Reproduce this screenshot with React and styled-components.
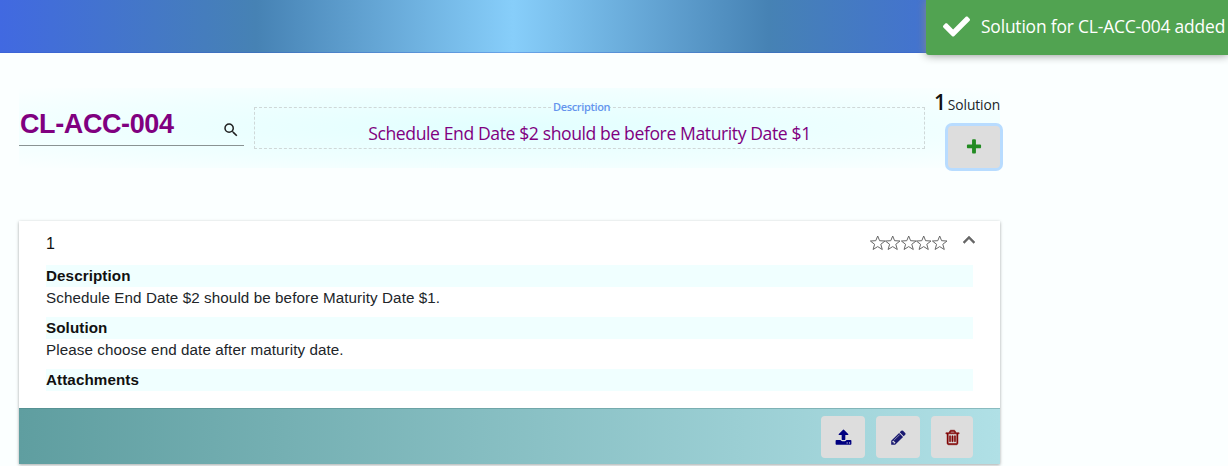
import React from "react";
import styled, { createGlobalStyle } from "styled-components";
import { FaCheck } from "react-icons/fa";
import { MdSearch, MdExpandLess } from "react-icons/md";

const GlobalStyle = createGlobalStyle`
  *, *::before, *::after { box-sizing: border-box; }
  body {
    margin: 0;
    background: #fbffff;
    color: #212529;
    font-family: "Open Sans", "Noto Sans", sans-serif;
    overflow: hidden;
  }
`;

const Page = styled.div`
  width: 1228px;
  height: 466px;
  overflow: hidden;
  position: relative;
`;

const Banner = styled.header`
  height: 53px;
  background: linear-gradient(to right, royalblue, steelblue 256px, lightskyblue 513px, steelblue 769px, royalblue 1025px);
  border-bottom: 1px solid rgba(50, 90, 200, 0.35);
`;

const Toast = styled.div`
  position: absolute;
  top: 0;
  right: 0;
  width: 302px;
  height: 55px;
  padding: 0 0 3px 17px;
  display: flex;
  align-items: center;
  gap: 11px;
  border-radius: 0 0 0 3px;
  background: #51a351;
  box-shadow: 0 0 10px #888;
  color: #fff;
  white-space: nowrap;
`;

const ToastText = styled.span`
  font-size: 17.4px;
  line-height: 24px;
  letter-spacing: -0.17px;
`;

const Main = styled.main`
  width: 981px;
  margin-left: 19px;
`;

const SearchPanel = styled.section`
  display: flex;
  height: 80px;
  margin-top: 35px;
  background: radial-gradient(ellipse farthest-corner at center, #e2ffff, #f0ffff 62%, #fbffff 100%);
`;

const CodeField = styled.div`
  width: 225px;
  height: 58px;
  padding: 0 4px 0 1px;
  display: flex;
  align-items: center;
  justify-content: space-between;
  border-bottom: 1px solid #8a9393;
`;

const CodeText = styled.span`
  padding-top: 14px;
  font: bold 27px/30px "Liberation Sans", Arial, sans-serif;
  letter-spacing: -0.4px;
  color: purple;
`;

const SearchIcon = styled(MdSearch)`
  margin-top: 27px;
  color: #202020;
`;

const MessageBox = styled.fieldset`
  width: 671px;
  height: 49px;
  min-width: 0;
  margin: 12px 0 0 10px;
  padding: 0;
  border: 1px dashed #cfd8d8;
`;

const MessageLegend = styled.legend`
  margin-left: 298px;
  padding: 0;
  font-size: 11px;
  line-height: 14px;
  letter-spacing: -0.35px;
  font-weight: 600;
  color: cornflowerblue;
`;

const MessageText = styled.div`
  padding-top: 7px;
  text-align: center;
  font-size: 17.6px;
  line-height: 24px;
  letter-spacing: -0.41px;
  color: purple;
  white-space: nowrap;
`;

const Counter = styled.div`
  width: 75px;
  display: flex;
  flex-direction: column;
  align-items: flex-end;
  flex: none;
`;

const CountLine = styled.div`
  height: 39px;
  display: flex;
  align-items: baseline;
  gap: 2px;
  font-size: 13.8px;
  line-height: 26px;
  letter-spacing: -0.1px;
`;

const Count = styled.strong`
  font-size: 21px;
  font-weight: 600;
  line-height: 28px;
  color: #111;
`;

const IconButton = styled.button`
  width: ${(p) => p.$width || 44}px;
  height: 42px;
  flex: none;
  padding: 0;
  border: 0;
  border-radius: 4px;
  display: flex;
  align-items: center;
  justify-content: center;
  background: #ddd;
  color: ${(p) => p.$color};
  box-shadow: ${(p) => (p.$focused ? "0 0 0 3px #b8dcff" : "none")};
`;

const Card = styled.article`
  height: 243px;
  margin-top: 53px;
  display: flex;
  flex-direction: column;
  background: #fff;
  box-shadow: 0 1px 3px rgba(0, 0, 0, 0.35);
  font: 15.2px/22px "Liberation Sans", Arial, sans-serif;
`;

const CardHeader = styled.div`
  height: 44px;
  padding: 0 19px 0 27px;
  display: flex;
  align-items: center;
  color: #111;
  font-size: 16px;
`;

const CardNumber = styled.span`
  padding-top: 2px;
`;

const Rating = styled.div`
  margin-left: auto;
  margin-right: 10px;
  display: flex;
`;

const Collapse = styled(MdExpandLess)`
  margin-bottom: 6px;
  color: #666;

  path:last-child {
    stroke: #666;
    stroke-width: 0.5px;
  }
`;

const CardBody = styled.div`
  flex: 1;
  padding: 0 27px;
`;

const FieldName = styled.h2`
  height: 22px;
  margin: 0;
  background: #f0ffff;
  font-size: 15.2px;
  line-height: 21px;
  letter-spacing: 0.09px;
  color: #111;
`;

const FieldValue = styled.p`
  height: 30px;
  margin: 0;
  line-height: 21px;
  letter-spacing: 0.09px;
`;

const CardFooter = styled.footer`
  height: 56px;
  padding: 7px 27px 0;
  display: flex;
  justify-content: flex-end;
  gap: 11px;
  border-top: 1px solid rgba(70, 120, 120, 0.35);
  background: linear-gradient(to right, cadetblue, powderblue);
`;

const GlyphSvg = styled.svg`
  fill: currentColor;
  stroke: currentColor;
  stroke-width: ${(p) => p.$weight}px;
`;

const PLUS =
  "M1600 736v192q0 40-28 68t-68 28h-416v416q0 40-28 68t-68 28h-192q-40 0-68-28t-28-68v-416h-416q-40 0-68-28t-28-68v-192q0-40 28-68t68-28h416v-416q0-40 28-68t68-28h192q40 0 68 28t28 68v416h416q40 0 68 28t28 68z";
const UPLOAD =
  "M1344 1472q0-26-19-45t-45-19-45 19-19 45 19 45 45 19 45-19 19-45zm256 0q0-26-19-45t-45-19-45 19-19 45 19 45 45 19 45-19 19-45zm128-224v320q0 40-28 68t-68 28h-1472q-40 0-68-28t-28-68v-320q0-40 28-68t68-28h427q21 56 70.5 92t110.5 36h256q61 0 110.5-36t70.5-92h427q40 0 68 28t28 68zm-325-648q-17 40-59 40h-256v448q0 26-19 45t-45 19h-256q-26 0-45-19t-19-45v-448h-256q-42 0-59-40-17-39 14-69l448-448q18-19 45-19t45 19l448 448q31 30 14 69z";
const PENCIL =
  "M491 1536l91-91-235-235-91 91v107h128v128h107zm523-928q0-22-22-22-10 0-17 7l-542 542q-7 7-7 17 0 22 22 22 10 0 17-7l542-542q7-7 7-17zm-54-192l416 416-832 832h-416v-416zm683 96q0 53-37 90l-166 166-416-416 166-165q36-38 90-38 53 0 91 38l235 234q37 39 37 91z";
const TRASH =
  "M704 736v576q0 14-9 23t-23 9h-64q-14 0-23-9t-9-23v-576q0-14 9-23t23-9h64q14 0 23 9t9 23zm256 0v576q0 14-9 23t-23 9h-64q-14 0-23-9t-9-23v-576q0-14 9-23t23-9h64q14 0 23 9t9 23zm256 0v576q0 14-9 23t-23 9h-64q-14 0-23-9t-9-23v-576q0-14 9-23t23-9h64q14 0 23 9t9 23zm128 724v-948h-896v948q0 22 7 40.5t14.5 27 10.5 8.5h832q3 0 10.5-8.5t14.5-27 7-40.5zm-672-1076h448l-48-117q-7-9-17-11h-317q-10 2-17 11zm928 32v64q0 14-9 23t-23 9h-96v948q0 83-47 143.5t-113 60.5h-832q-66 0-113-58.5t-47-141.5v-952h-96q-14 0-23-9t-9-23v-64q0-14 9-23t23-9h309l70-167q15-37 54-63t79-26h320q40 0 79 26t54 63l70 167h309q14 0 23 9t9 23z";

const Glyph = ({ path, size = 16, weight = 0 }) => (
  <GlyphSvg width={size} height={size} viewBox="0 0 1792 1792" $weight={weight} aria-hidden="true">
    <path d={path} />
  </GlyphSvg>
);

const Star = () => (
  <svg width="15.4" height="16" viewBox="0 0 15.4 16" fill="none" stroke="#666" aria-hidden="true">
    <path d="M7.7 1L9.6 5.7L15 6L10.8 9.3L12.3 14.5L7.7 11.6L3.1 14.5L4.6 9.3L.4 6L5.8 5.7Z" />
  </svg>
);

export default function App() {
  return (
    <Page>
      <GlobalStyle />
      <Banner />
      <Main>
        <SearchPanel>
          <CodeField>
            <CodeText>CL-ACC-004</CodeText>
            <SearchIcon size={18} />
          </CodeField>
          <MessageBox>
            <MessageLegend>Description</MessageLegend>
            <MessageText>Schedule End Date $2 should be before Maturity Date $1</MessageText>
          </MessageBox>
          <Counter>
            <CountLine>
              <Count>1</Count>
              <span>Solution</span>
            </CountLine>
            <IconButton $width={52} $color="forestgreen" $focused aria-label="Add solution">
              <Glyph path={PLUS} size={18} />
            </IconButton>
          </Counter>
        </SearchPanel>
        <Card>
          <CardHeader>
            <CardNumber>1</CardNumber>
            <Rating>
              {[1, 2, 3, 4, 5].map((n) => (
                <Star key={n} />
              ))}
            </Rating>
            <Collapse size={24} />
          </CardHeader>
          <CardBody>
            <FieldName>Description</FieldName>
            <FieldValue>Schedule End Date $2 should be before Maturity Date $1.</FieldValue>
            <FieldName>Solution</FieldName>
            <FieldValue>Please choose end date after maturity date.</FieldValue>
            <FieldName>Attachments</FieldName>
          </CardBody>
          <CardFooter>
            <IconButton $color="navy" aria-label="Upload">
              <Glyph path={UPLOAD} size={17} />
            </IconButton>
            <IconButton $color="midnightblue" aria-label="Edit">
              <Glyph path={PENCIL} size={17} />
            </IconButton>
            <IconButton $width={42} $color="maroon" aria-label="Delete">
              <Glyph path={TRASH} size={17} weight={50} />
            </IconButton>
          </CardFooter>
        </Card>
      </Main>
      <Toast>
        <FaCheck size={27} />
        <ToastText>Solution for CL-ACC-004 added</ToastText>
      </Toast>
    </Page>
  );
}
